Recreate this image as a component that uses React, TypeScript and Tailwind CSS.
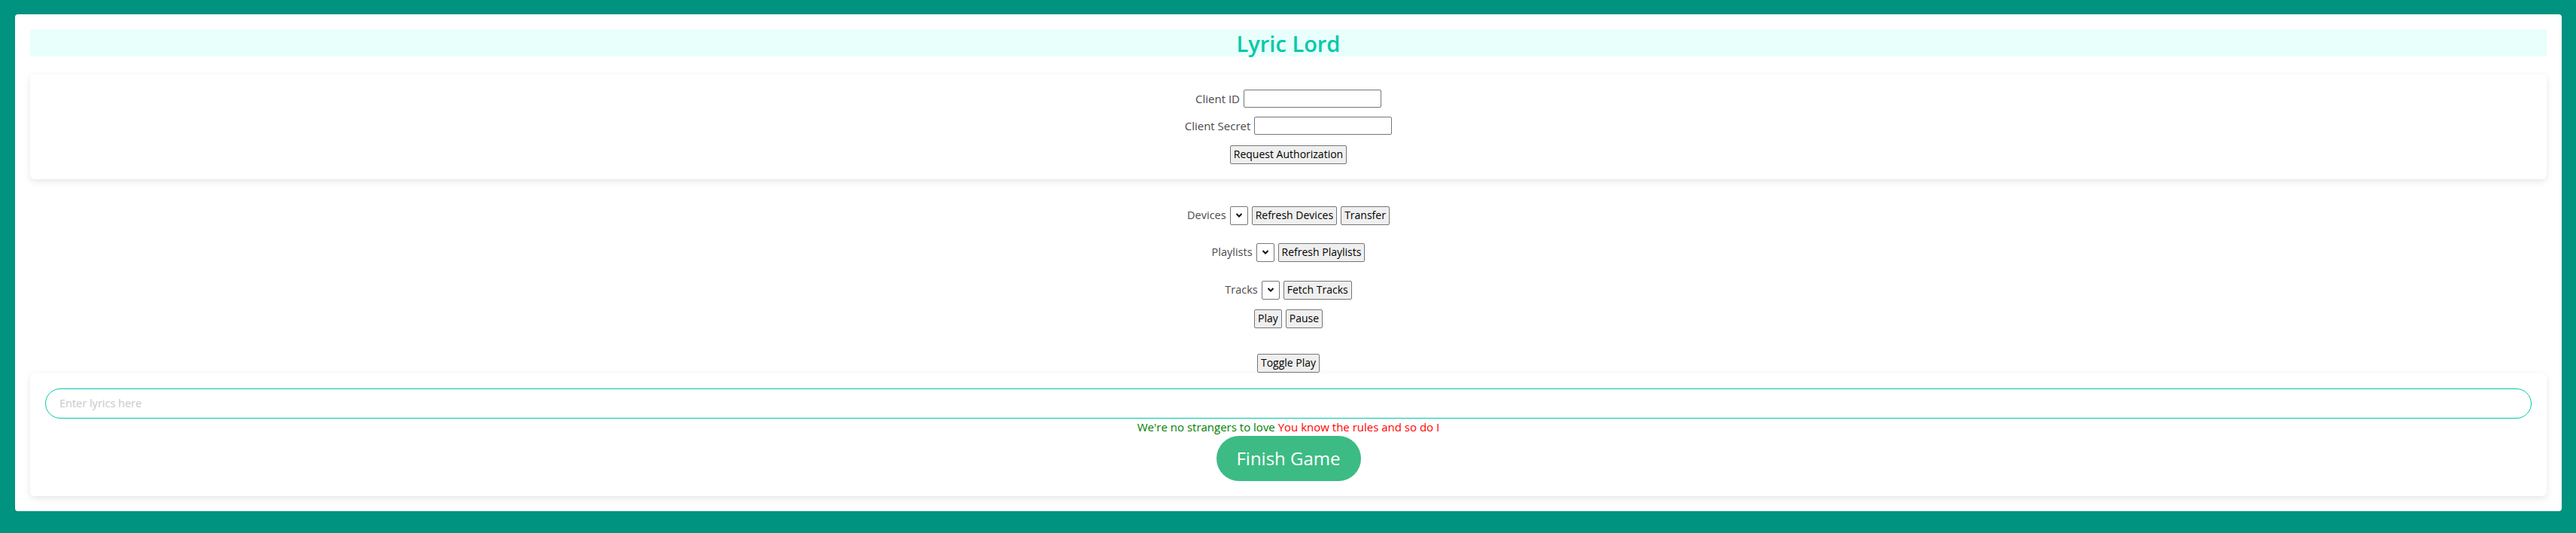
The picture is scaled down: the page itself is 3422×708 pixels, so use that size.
import { useState } from "react";

const font = { fontFamily: '"Open Sans", "Noto Sans", sans-serif' };

function Chevron() {
  return (
    <svg
      width="10"
      height="7"
      viewBox="0 0 10 7"
      className="pointer-events-none absolute left-1/2 top-1/2 -translate-x-1/2 -translate-y-1/2"
    >
      <path d="M1.5 1.5 L5 5 L8.5 1.5" fill="none" stroke="#111" strokeWidth="2" />
    </svg>
  );
}

function Picker() {
  return (
    <span className="relative inline-block h-[25px] w-[24px]">
      <select className="h-full w-full appearance-none rounded-[2px] border border-[#767676] bg-white" />
      <Chevron />
    </span>
  );
}

function Btn({ children }: { children: React.ReactNode }) {
  return (
    <button className="h-[25px] rounded-[2px] border border-[#767676] bg-[#efefef] px-[4px] text-[14px] leading-none text-black">
      {children}
    </button>
  );
}

export default function App() {
  const [clientId, setClientId] = useState("");
  const [clientSecret, setClientSecret] = useState("");
  const [lyrics, setLyrics] = useState("");

  return (
    <div className="h-screen bg-[#00937f] pl-[20px] pr-[19px] pt-[19px]" style={font}>
      <div className="rounded-[4px] bg-white px-[20px] py-[20px]">
        {/* Title */}
        <div className="flex h-[36px] items-center justify-center bg-[#e8fffc]">
          <h1 className="text-[29px] font-semibold leading-none text-[#00c9a7]">Lyric Lord</h1>
        </div>

        {/* Auth */}
        <div className="mt-[24px] flex flex-col items-center gap-[12px] rounded-md bg-white py-[20px] shadow-[0_3px_10px_rgba(0,0,0,0.1)]">
          <div className="flex items-center gap-[5px] text-[15px] text-[#4a4a4a]">
            <label>Client ID</label>
            <input
              value={clientId}
              onChange={(e) => setClientId(e.target.value)}
              className="h-[24px] w-[183px] rounded-[2px] border border-[#767676] px-1"
            />
          </div>
          <div className="flex items-center gap-[5px] text-[15px] text-[#4a4a4a]">
            <label>Client Secret</label>
            <input
              value={clientSecret}
              onChange={(e) => setClientSecret(e.target.value)}
              className="h-[24px] w-[183px] rounded-[2px] border border-[#767676] px-1"
            />
          </div>
          <div className="mt-[1px]">
            <Btn>Request Authorization</Btn>
          </div>
        </div>

        {/* Player controls */}
        <div className="flex flex-col items-center pt-[36px] text-[14.5px] text-[#4a4a4a]">
          <div className="flex items-center gap-[5px]">
            <span>Devices</span>
            <Picker />
            <Btn>Refresh Devices</Btn>
            <Btn>Transfer</Btn>
          </div>
          <div className="mt-[24px] flex items-center gap-[5px]">
            <span>Playlists</span>
            <Picker />
            <Btn>Refresh Playlists</Btn>
          </div>
          <div className="mt-[25px] flex items-center gap-[5px]">
            <span>Tracks</span>
            <Picker />
            <Btn>Fetch Tracks</Btn>
          </div>
          <div className="mt-[13px] flex items-center gap-[5px]">
            <Btn>Play</Btn>
            <Btn>Pause</Btn>
          </div>
          <div className="mt-[34px]">
            <Btn>Toggle Play</Btn>
          </div>
        </div>

        {/* Game */}
        <div className="mt-[1px] flex flex-col items-center rounded-md bg-white px-[20px] pb-[20px] pt-[20px] shadow-[0_3px_10px_rgba(0,0,0,0.1)]">
          <input
            value={lyrics}
            onChange={(e) => setLyrics(e.target.value)}
            placeholder="Enter lyrics here"
            className="h-[40px] w-full rounded-full border border-[#00c9a7] px-[18px] text-[14.5px] outline-none placeholder:text-[#c8c8c8]"
          />
          <p className="flex h-[23px] items-center text-[15px]">
            <span className="text-[#008000]">We're no strangers to love&nbsp;</span>
            <span className="text-[#ff0000]">You know the rules and so do I</span>
          </p>
          <button className="h-[60px] w-[192px] rounded-full bg-[#3dbb84] text-[24px] text-white">
            Finish Game
          </button>
        </div>
      </div>
    </div>
  );
}
